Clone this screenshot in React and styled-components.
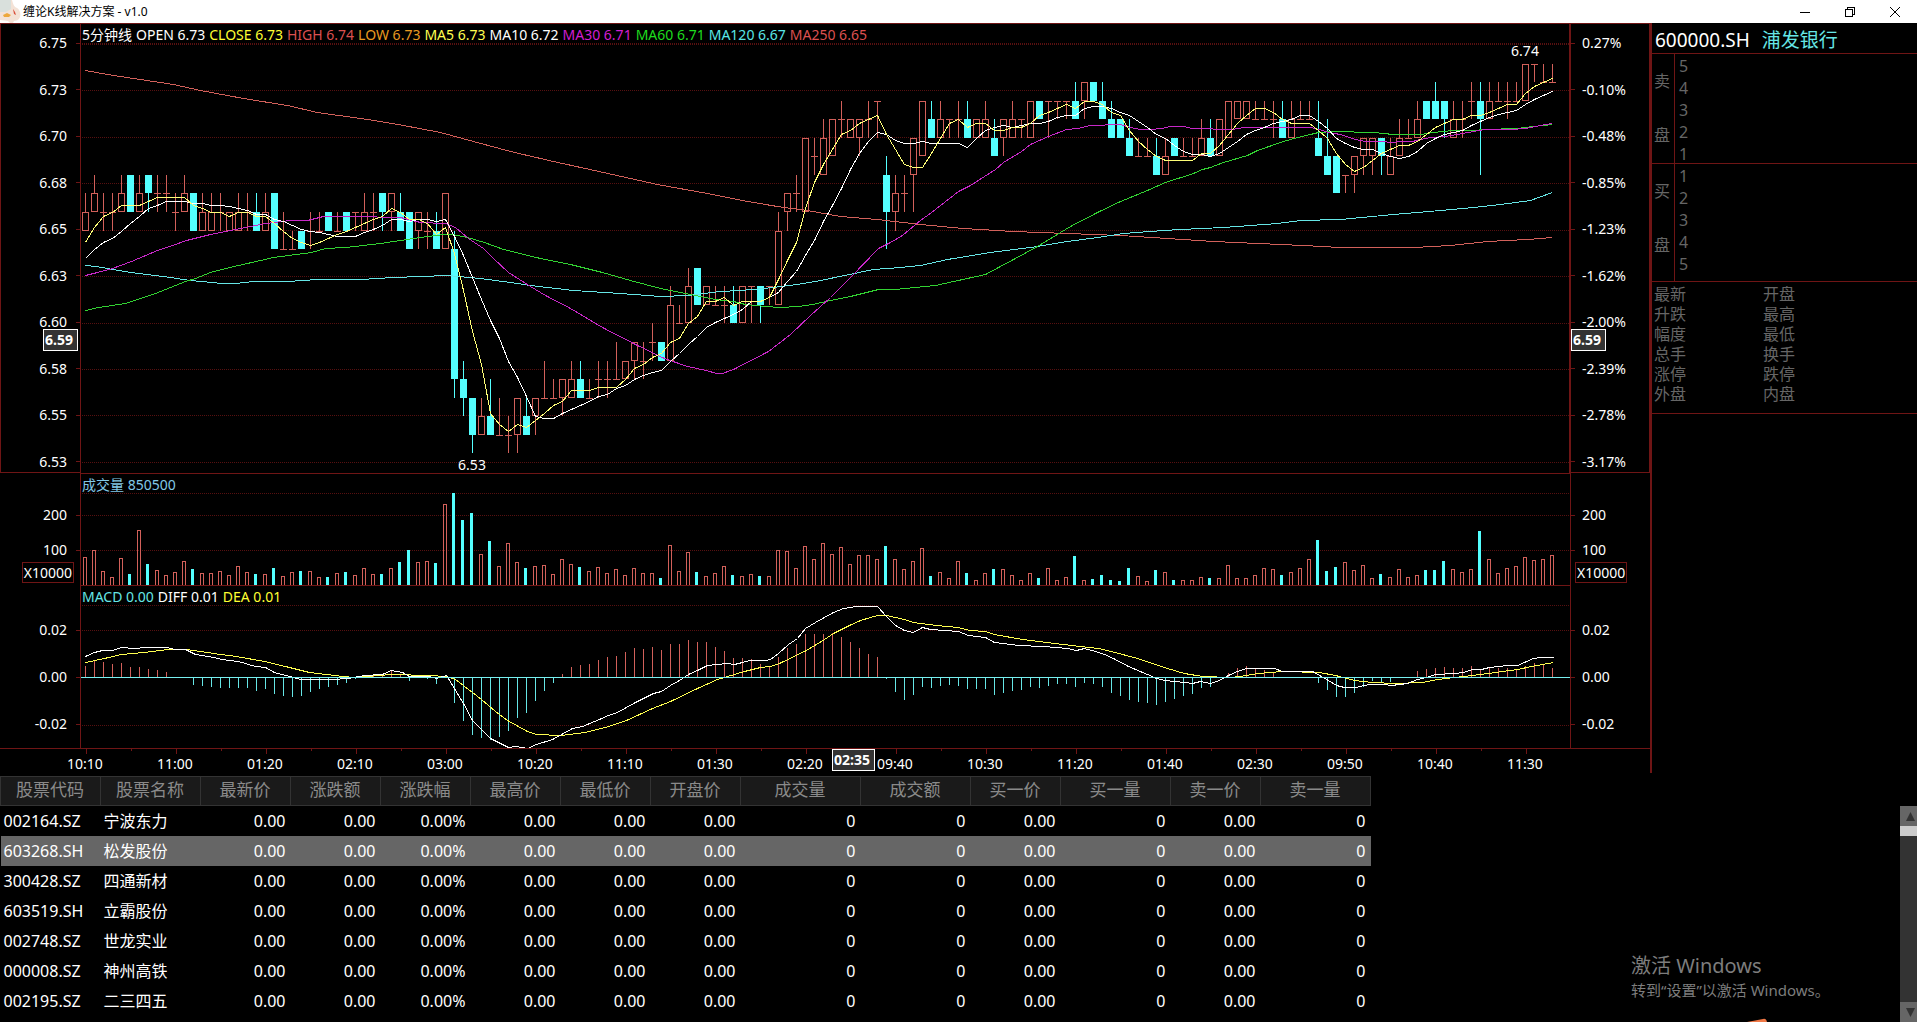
import React from "react";
import styled, { createGlobalStyle } from "styled-components";

const GlobalStyle = createGlobalStyle`
  * {
    box-sizing: border-box;
  }

  body {
    margin: 0;
    background: #000;
    color: #fff;
    font-family: "Noto Sans", "Noto Sans CJK SC", sans-serif;
    font-size: 14px;
  }

  ul, ol {
    margin: 0;
    padding: 0;
    list-style: none;
  }

  button {
    padding: 0;
    border: 0;
    background: none;
    font: inherit;
  }
`;

const RED = "#d2605a";
const CYAN = "#54ffff";
const FRAME = "#6f1515";

const Window = styled.div`
  position: relative;
  display: flex;
  flex-direction: column;
  height: 100vh;
  overflow: hidden;
`;

const TitleBar = styled.header`
  display: flex;
  align-items: center;
  flex: none;
  height: 23px;
  background: #fff;
  color: #000;
`;

const WindowTitle = styled.h1`
  flex: 1;
  margin: 0 0 0 2px;
  font-size: 12px;
  font-weight: 400;
  line-height: 23px;
`;

const WindowButton = styled.button`
  display: flex;
  justify-content: center;
  align-items: center;
  width: 45px;
  height: 22px;
`;

const Workspace = styled.div`
  display: grid;
  grid-template-columns: minmax(0, 1fr) 267px;
  flex: none;
  height: 753px;
`;

const Charts = styled.main`
  display: flex;
  flex-direction: column;
`;

const ChartRow = styled.section`
  display: grid;
  grid-template-columns: 80px minmax(0, 1fr) 79px;
  grid-template-rows: 100%;
  flex: none;
  height: ${(p) => p.$height}px;
`;

const AxisLabel = styled.li`
  display: flex;
  flex-direction: ${(p) => (p.$right ? "row-reverse" : "row")};
  justify-content: flex-end;
  align-items: center;
  gap: ${(p) => (p.$right ? 7 : 9)}px;

  &::after {
    content: "";
    width: 4px;
    height: 1px;
    background: ${FRAME};
  }
`;

const Axis = styled.ul`
  position: relative;
  display: flex;
  flex-direction: column;
  justify-content: ${(p) => (p.$spread ? "space-between" : "flex-start")};
  padding-top: ${(p) => p.$top}px;
  line-height: 20px;
  border: 0 solid ${FRAME};
  border-width: ${(p) => (p.$framed ? "1px" : 0)};
  border-right-width: ${(p) => (p.$framed && p.$right ? "1px" : 0)};
  border-left-width: ${(p) => (p.$framed && !p.$right ? "1px" : 0)};

  ${AxisLabel} + ${AxisLabel} {
    margin-top: ${(p) => p.$gap || 0}px;
  }
`;

const Unit = styled.li`
  align-self: ${(p) => (p.$right ? "flex-start" : "flex-end")};
  margin: ${(p) => (p.$right ? "2px 0 0 4px" : "2px 6px 0 0")};
  height: 21px;
  padding: 0 1px;
  border: 1px solid ${FRAME};
  line-height: 19px;
`;

const Plot = styled.div`
  display: flex;
  flex-direction: column;
  border: 1px solid ${FRAME};
  border-width: 1px ${(p) => (p.$thick ? "2px" : "1px")} 0 1px;

  svg {
    display: block;
    flex: 1;
    width: 100%;
    min-height: 0;
  }
`;

const Legend = styled.div`
  display: flex;
  flex: none;
  gap: 4px;
  height: ${(p) => p.$height}px;
  padding-left: 1px;
  line-height: 21px;
  white-space: nowrap;
`;

const LegendItem = styled.span`
  color: ${(p) => p.$color};
`;

const CursorTag = styled.output`
  position: absolute;
  height: 22px;
  padding: 0 4px 0 1px;
  border: 1px solid #fff;
  background: #333;
  color: #fff;
  font-weight: 700;
  line-height: 19px;
`;

const PriceTag = styled(CursorTag)`
  top: 305px;
  ${(p) => (p.$right ? "left: 0;" : "right: 2px;")}
`;

const TimeTag = styled(CursorTag)`
  top: 0;
  left: 832px;
`;

const TimeAxis = styled.section`
  position: relative;
  flex: 1;
  border-top: 1px solid ${FRAME};

  svg {
    display: block;
    width: 100%;
    height: 5px;
  }
`;

const TimeList = styled.ol`
  display: flex;
  padding-left: 40px;
  line-height: 20px;
`;

const TimeLabel = styled.li`
  width: 90px;
  text-align: center;
`;

const Quote = styled.aside`
  height: 750px;
  border-left: 2px solid ${FRAME};
  color: #666;
  font-size: 16px;
`;

const QuoteHead = styled.h2`
  display: flex;
  gap: 12px;
  height: 30px;
  margin: 0;
  padding-left: 3px;
  color: #fff;
  font-size: 19px;
  font-weight: 400;
  line-height: 35px;
`;

const StockName = styled.span`
  color: #66e6e6;
`;

const OrderSide = styled.section`
  display: flex;
  height: ${(p) => p.$height}px;
  border-top: 1px solid ${FRAME};
`;

const SideName = styled.h3`
  display: flex;
  flex-direction: column;
  justify-content: space-around;
  width: 22px;
  height: 108px;
  margin: 0;
  padding-left: 2px;
  font-size: 16px;
  font-weight: 400;
  line-height: 24px;
`;

const OrderLevels = styled.ol`
  flex: 1;
  padding: 1px 0 0 4px;
  border-left: 1px solid ${FRAME};
  line-height: 22px;
`;

const QuoteFacts = styled.ul`
  display: grid;
  grid-template-columns: 109px 1fr;
  grid-auto-rows: 20px;
  align-content: start;
  height: 133px;
  padding: 2px 0 0 2px;
  border: 1px solid ${FRAME};
  border-width: 1px 0;
  line-height: 20px;
`;

const ListArea = styled.section`
  display: flex;
  justify-content: space-between;
  flex: 1;
  min-height: 0;
`;

const StockTable = styled.table`
  table-layout: fixed;
  width: 1371px;
  border-collapse: collapse;
  align-self: flex-start;
  font-size: 16px;
`;

const HeadCell = styled.th`
  height: 29px;
  padding: 0 1px 2px 0;
  border: 1px solid #333;
  background: #1a1a1a;
  color: #8a8a8a;
  font-size: 17px;
  font-weight: 400;
  line-height: 26px;
`;

const Row = styled.tr`
  height: 30px;
  background: ${(p) => (p.$selected ? "#666" : "transparent")};
`;

const Cell = styled.td`
  padding: 0 5px 0 3px;
  line-height: 24px;
  text-align: ${(p) => (p.$text ? "left" : "right")};
`;

const ScrollBar = styled.div`
  display: flex;
  flex-direction: column;
  width: 17px;
  margin-top: 30px;
  background: #333;
`;

const ScrollButton = styled.button`
  height: 20px;
  background: #666;
  color: #333;

  svg {
    display: block;
    margin-left: 6px;
  }
`;

const Thumb = styled.div`
  height: 10px;
  margin-bottom: auto;
  background: #ccc;
`;

const Watermark = styled.div`
  position: absolute;
  right: 84px;
  bottom: 22px;
  width: 202px;
  color: #7d7d7d;
  font-size: 15px;
  line-height: 20px;
  white-space: nowrap;
`;

const WatermarkTitle = styled.div`
  font-size: 20px;
  line-height: 28px;
`;

const Sticker = styled.svg`
  position: absolute;
  right: 148px;
  bottom: 0;
`;

// Each candle is "open high low close", in cents above 6.00
const candles = `65 67 65 66,66 68 66 67,66 67 65 66,66 67 65 66,66 68 66 67,68 68 66 66,66 68 66 67,68 68 66 67,67 68 66 67,67 68 66 67,
66 67 65 66,66 68 66 67,67 67 65 65,65 67 65 66,65 67 65 66,66 67 65 66,65 66 65 66,65 67 65 66,66 67 65 66,66 67 65 65,
65 67 65 66,67 67 64 64,64 66 64 64,64 65 64 64,65 65 64 64,65 66 64 65,65 66 65 65,66 66 65 65,65 66 65 65,66 66 65 65,
66 66 65 66,65 67 65 66,66 67 65 66,67 67 65 66,66 67 65 67,66 67 65 65,66 66 64 64,65 66 64 66,65 66 64 65,65 66 64 64,
64 67 64 67,64 65 56 57,57 58 55 56,56 56 53 54,54 56 54 55,55 57 54 54,54 56 54 54,54 55 53 54,54 56 53 56,55 56 54 54,
55 56 54 56,56 58 56 56,56 57 56 56,56 57 55 57,56 58 56 57,57 58 56 56,56 57 56 56,57 58 56 57,57 58 56 57,57 59 57 57,
57 58 57 58,58 59 57 59,58 59 57 58,59 60 58 59,59 59 58 58,58 62 58 61,60 61 60 60,60 63 60 62,63 63 61 61,61 62 61 62,
61 62 61 61,61 62 60 61,61 62 60 60,60 62 60 62,62 62 60 62,62 62 60 61,62 62 61 62,61 66 61 65,66 67 65 67,67 68 66 67,
66 70 66 70,69 70 68 69,68 71 68 70,69 71 69 71,71 72 70 71,70 71 70 71,70 71 69 71,71 72 70 71,72 72 70 72,68 69 64 66,
66 68 65 67,67 68 66 67,68 70 66 70,69 72 69 72,71 72 70 70,70 72 70 71,71 71 70 71,71 72 70 71,71 72 70 70,70 71 70 71,
70 72 70 71,70 71 69 69,70 71 69 71,70 72 70 71,71 71 70 71,70 72 70 72,72 72 71 71,72 72 70 72,72 72 71 72,72 72 71 72,
72 73 71 71,72 73 71 73,73 73 72 72,72 73 71 71,71 72 70 70,71 71 70 70,70 71 69 69,69 70 69 69,69 70 69 69,69 70 68 68,
68 70 68 69,70 70 69 69,69 70 69 69,69 70 69 69,69 71 69 70,70 71 69 69,69 71 69 71,70 72 70 72,71 72 71 72,71 72 71 72,
71 72 71 71,71 72 71 71,71 72 70 71,71 72 70 70,70 72 70 71,71 72 71 71,71 72 71 71,70 72 69 69,69 71 68 68,69 69 67 67,
68 68 67 68,68 69 67 69,69 70 68 70,69 70 68 70,70 70 68 69,68 70 68 69,69 71 69 70,70 71 70 70,70 72 70 71,72 72 71 71,
72 73 71 71,72 72 70 71,70 72 70 71,71 72 70 71,72 73 71 72,72 73 68 71,71 73 71 72,72 73 72 72,72 73 71 72,72 73 72 72,
72 74 72 74,74 74 73 74,73 74 73 73,73 74 73 73`
  .split(",")
  .map((c) => c.trim().split(" ").map(Number));

// closes of the session before, needed to start the short averages
const earlierCloses = [62, 62, 64, 63, 62, 63, 63, 65, 65];

const volumes = [
  28, 35, 14, 8, 27, 11, 55, 21, 15, 10, 13, 24, 16, 12, 12, 14, 10, 19, 13, 11,
  11, 17, 9, 13, 14, 14, 8, 8, 12, 13, 10, 17, 11, 11, 17, 23, 35, 23, 24, 22,
  81, 92, 65, 72, 31, 44, 19, 42, 23, 17, 19, 20, 11, 26, 21, 18, 14, 18, 12, 16,
  10, 17, 12, 12, 7, 40, 14, 33, 13, 9, 12, 19, 10, 9, 11, 9, 9, 35, 34, 17,
  39, 26, 42, 31, 38, 21, 30, 30, 26, 39, 26, 16, 24, 37, 9, 13, 7, 24, 12, 5,
  12, 16, 16, 10, 5, 12, 7, 17, 5, 8, 29, 5, 6, 10, 5, 4, 17, 9, 4, 15,
  13, 5, 5, 5, 8, 7, 7, 20, 7, 7, 10, 17, 16, 10, 13, 17, 26, 45, 14, 18,
  23, 15, 20, 7, 11, 8, 16, 8, 10, 15, 15, 24, 16, 13, 16, 54, 26, 12, 17, 19,
  28, 25, 26, 30,
];

const histogram = [
  11, 16, 15, 13, 14, 10, 10, 8, 7, 5, 0, 0, -8, -9, -10, -11, -11, -11, -11, -14,
  -12, -17, -19, -20, -19, -15, -12, -10, -8, -6, -2, 1, 2, 3, 6, 3, -4, 0, -2, -7,
  1, -26, -44, -58, -61, -63, -60, -54, -41, -36, -24, -14, -6, 3, 10, 12, 13, 17, 20, 21,
  25, 29, 28, 30, 27, 33, 33, 37, 35, 35, 30, 26, 19, 19, 18, 13, 11, 20, 29, 33,
  43, 43, 43, 44, 40, 35, 29, 23, 20, -2, -15, -23, -18, -10, -11, -9, -8, -9, -12, -12,
  -12, -18, -16, -14, -13, -10, -11, -9, -7, -7, -10, -6, -7, -10, -16, -19, -23, -25, -26, -28,
  -25, -22, -19, -17, -11, -10, 0, 4, 9, 11, 9, 7, 5, 0, 0, 0, 0, -6, -13, -20,
  -20, -16, -10, -4, -5, -5, 0, 0, 6, 8, 9, 10, 9, 9, 11, 8, 10, 9, 9, 8,
  11, 14, 12, 9,
];

const lines = {
  ma30: "85,275 97,272 112,268 131,261 157,250 175,244 186,240 210,234 230,230 265,223 290,220 307,220 323,216 352,216 400,217 420,222 445,223 455,227 468,238 483,248 492,257 508,272 530,286 545,295 570,308 602,327 635,344 664,358 687,366 706,370 716,373 722,373 733,369 768,351 790,334 810,315 830,297 850,277 878,248 890,242 902,235 920,220 931,212 958,191 970,185 995,169 1003,162 1021,151 1030,144 1048,136 1066,129 1078,128 1089,125 1120,124 1130,127 1140,129 1150,129 1161,128 1170,126 1183,126 1192,128 1205,128 1220,129 1232,129 1243,127 1310,127 1319,129 1328,132 1340,134 1355,139 1365,141 1380,141 1392,142 1400,141 1412,141 1420,139 1430,137 1445,136 1457,134 1473,131 1485,129 1510,129 1525,128 1540,125 1552,123",
  ma60: "85,310 98,307 125,303 155,293 185,281 195,278 210,272 225,268 273,257 311,252 325,248 345,247 380,243 420,237 443,234 452,234 467,237 484,242 503,249 540,258 570,264 602,272 630,280 660,288 695,295 715,299 733,301 745,304 765,306 780,307 798,306 812,304 830,300 850,296 878,289 895,289 935,285 985,274 1013,259 1037,246 1060,232 1070,226 1097,212 1120,201 1147,190 1165,182 1193,173 1202,169 1210,167 1223,162 1247,155 1257,150 1280,142 1293,138 1310,134 1318,132 1333,131 1373,132 1393,134 1420,134 1433,132 1453,130 1473,130 1485,129 1517,128 1533,126 1552,124",
  ma120: "85,265 95,266 107,268 130,272 163,276 190,280 222,283 235,283 253,281 287,281 317,279 360,279 393,277 447,275 480,278 510,282 530,285 573,290 620,293 660,296 687,295 720,291 740,290 773,287 797,284 820,280 873,269 900,267 920,265 947,259 990,252 1037,246 1067,241 1097,237 1123,233 1163,230 1180,229 1223,227 1277,223 1300,220 1340,219 1393,214 1440,210 1473,207 1500,204 1530,200 1552,192",
  ma250: "85,70 107,74 133,78 173,84 200,90 243,98 287,105 317,112 367,119 403,125 440,132 473,141 510,151 553,161 603,172 657,184 707,193 747,201 783,207 807,210 840,216 877,219 920,224 963,228 1013,231 1067,233 1120,235 1167,238 1213,241 1280,244 1303,245 1340,247 1413,247 1450,245 1487,241 1527,239 1552,237",
  diff: "85,656 94,652 102,650 112,650 121,647 134,648 145,647 166,647 175,649 185,649 195,654 214,657 221,659 238,661 255,666 265,667 274,672 293,677 300,679 332,679 348,678 364,675 382,674 391,670 402,672 409,676 429,676 436,678 446,675 463,703 472,720 481,729 490,738 508,747 516,746 527,748 536,744 552,739 572,728 582,726 599,719 608,715 617,712 635,702 643,698 653,693 661,691 670,685 679,680 688,674 697,670 707,665 726,663 734,664 742,662 749,660 765,660 770,659 778,653 788,644 797,638 805,628 815,622 824,617 833,612 843,608 856,606 877,606 886,616 895,625 904,630 913,632 922,627 930,629 945,630 958,631 968,635 985,637 994,642 1018,645 1043,646 1067,648 1076,650 1084,648 1095,651 1104,654 1113,658 1128,666 1147,674 1156,678 1165,680 1184,682 1192,683 1200,681 1210,683 1219,680 1228,675 1237,671 1246,668 1274,668 1282,671 1312,671 1319,675 1328,680 1336,685 1344,687 1356,687 1363,685 1370,684 1383,684 1391,685 1407,683 1417,679 1426,677 1435,674 1454,673 1463,672 1472,669 1481,669 1489,667 1507,665 1517,665 1524,662 1533,658 1541,657 1553,657",
  dea: "85,662 104,658 121,654 143,652 168,649 186,649 207,652 220,654 236,656 264,661 289,667 309,672 343,676 354,677 391,674 429,675 446,676 455,679 472,692 481,699 495,711 507,720 527,731 536,734 561,735 585,732 608,726 626,720 652,708 670,701 697,688 717,679 744,671 760,667 770,666 779,663 806,650 824,639 833,633 849,625 860,620 877,615 886,615 904,619 913,622 936,625 958,627 969,630 985,631 994,634 1022,639 1054,643 1080,646 1098,648 1111,651 1137,658 1167,668 1184,673 1202,676 1230,677 1239,676 1258,673 1282,671 1319,672 1335,675 1354,680 1372,682 1394,683 1422,682 1437,679 1463,676 1480,674 1517,669 1531,666 1553,662",
};

const prices = ["6.75", "6.73", "6.70", "6.68", "6.65", "6.63", "6.60", "6.58", "6.55", "6.53"];
const percents = ["0.27%", "-0.10%", "-0.48%", "-0.85%", "-1.23%", "-1.62%", "-2.00%", "-2.39%", "-2.78%", "-3.17%"];
const times = ["10:10", "11:00", "01:20", "02:10", "03:00", "10:20", "11:10", "01:30", "02:20", "09:40", "10:30", "11:20", "01:40", "02:30", "09:50", "10:40", "11:30"];

const priceLegend = [
  ["5分钟线", "#fff"],
  ["OPEN 6.73", "#fff"],
  ["CLOSE 6.73", "#ffff32"],
  ["HIGH 6.74", "#dc5050"],
  ["LOW 6.73", "#e89a20"],
  ["MA5 6.73", "#ffff50"],
  ["MA10 6.72", "#fff"],
  ["MA30 6.71", "#d21ed2"],
  ["MA60 6.71", "#1edc1e"],
  ["MA120 6.67", "#5ae6e6"],
  ["MA250 6.65", "#dc5050"],
];

const macdLegend = [
  ["MACD 0.00", "#66e6e6"],
  ["DIFF 0.01", "#fff"],
  ["DEA 0.01", "#ffff32"],
];

const columns = [
  ["股票代码", 100],
  ["股票名称", 100],
  ["最新价", 90],
  ["涨跌额", 90],
  ["涨跌幅", 90],
  ["最高价", 90],
  ["最低价", 90],
  ["开盘价", 90],
  ["成交量", 120],
  ["成交额", 110],
  ["买一价", 90],
  ["买一量", 110],
  ["卖一价", 90],
  ["卖一量", 110],
];

const stocks = [
  ["002164.SZ", "宁波东力"],
  ["603268.SH", "松发股份"],
  ["300428.SZ", "四通新材"],
  ["603519.SH", "立霸股份"],
  ["002748.SZ", "世龙实业"],
  ["000008.SZ", "神州高铁"],
  ["002195.SZ", "二三四五"],
];

const emptyQuote = ["0.00", "0.00", "0.00%", "0.00", "0.00", "0.00", "0", "0", "0.00", "0", "0.00", "0"];

const facts = ["最新", "开盘", "升跌", "最高", "幅度", "最低", "总手", "换手", "涨停", "跌停", "外盘", "内盘"];

const barX = (i) => 85 + i * 9;
const priceY = (cents) => Math.round(63.5 + (74 - cents) * 18.57);
const isDown = ([open, , , close]) => close < open;

function average(period) {
  const closes = [...earlierCloses, ...candles.map((c) => c[3])];
  return candles
    .map((_, i) => {
      const end = i + earlierCloses.length + 1;
      const sum = closes.slice(end - period, end).reduce((a, b) => a + b, 0);
      return `${barX(i)},${priceY(sum / period)}`;
    })
    .join(" ");
}

function Curve({ points, color }) {
  return (
    <polyline
      points={points}
      fill="none"
      stroke={color}
      transform="translate(0.5 0.5)"
    />
  );
}

// Charts share one coordinate system; top is where the pane starts in it
function Pane({ top, grid, children }) {
  return (
    <svg shapeRendering="crispEdges">
      <g transform={`translate(-81 ${-top})`}>
        {grid.map((y) => (
          <line
            key={y}
            x1="82"
            x2="120%"
            y1={y + 0.5}
            y2={y + 0.5}
            stroke="#571010"
            strokeDasharray="1 1"
          />
        ))}
        {children}
      </g>
    </svg>
  );
}

function Candle({ candle, index }) {
  const [open, high, low, close] = candle;
  const x = barX(index);
  const top = priceY(Math.max(open, close));
  const bottom = priceY(Math.min(open, close));
  if (isDown(candle)) {
    return (
      <g fill={CYAN}>
        <rect x={x} y={priceY(high)} width="1" height={priceY(low) - priceY(high)} />
        <rect x={x - 3} y={top} width="7" height={bottom - top} />
      </g>
    );
  }
  return (
    <g fill={RED}>
      <rect x={x} y={priceY(high)} width="1" height={top - priceY(high)} />
      <rect x={x} y={bottom} width="1" height={priceY(low) - bottom} />
      {top === bottom ? (
        <rect x={x - 3} y={top} width="7" height="1" />
      ) : (
        <rect x={x - 2.5} y={top + 0.5} width="6" height={bottom - top - 1} fill="none" stroke={RED} />
      )}
    </g>
  );
}

function PriceChart() {
  return (
    <Plot $thick>
      <Legend $height={16}>
        {priceLegend.map(([text, color]) => (
          <LegendItem key={text} $color={color}>{text}</LegendItem>
        ))}
      </Legend>
      <Pane top={40} grid={[43, 44, 90, 137, 183, 230, 276, 323, 369, 415, 462]}>
        {candles.map((c, i) => (
          <Candle key={i} candle={c} index={i} />
        ))}
        <Curve points={lines.ma250} color="#d2605a" />
        <Curve points={lines.ma120} color="#66e6e6" />
        <Curve points={lines.ma60} color="#32d232" />
        <Curve points={lines.ma30} color="#c828c8" />
        <Curve points={average(10)} color="#fff" />
        <Curve points={average(5)} color="#ffff78" />
        <text x="1525" y="56" fill="#fff" textAnchor="middle">6.74</text>
        <text x="472" y="470" fill="#fff" textAnchor="middle">6.53</text>
      </Pane>
    </Plot>
  );
}

function VolumeChart() {
  return (
    <Plot>
      <Legend $height={19}>
        <LegendItem $color="#82c8e6">成交量 850500</LegendItem>
      </Legend>
      <Pane top={493} grid={[493, 515, 550]}>
        {volumes.map((v, i) =>
          isDown(candles[i]) ? (
            <rect key={i} x={barX(i) - 2} y={585 - v} width="3" height={v} fill={CYAN} />
          ) : (
            <path key={i} d={`M${barX(i) - 1.5} 585v${0.5 - v}h3v${v - 0.5}`} fill="none" stroke={RED} />
          )
        )}
      </Pane>
    </Plot>
  );
}

function MacdChart() {
  return (
    <Plot>
      <Legend $height={19}>
        {macdLegend.map(([text, color]) => (
          <LegendItem key={text} $color={color}>{text}</LegendItem>
        ))}
      </Legend>
      <Pane top={605} grid={[605, 630, 725]}>
        {histogram.map((h, i) => (
          <rect
            key={i}
            x={barX(i)}
            y={h > 0 ? 677 - h : 677}
            width="1"
            height={Math.abs(h)}
            fill={h > 0 ? RED : "#66e6e6"}
          />
        ))}
        <Curve points={lines.dea} color="#ffff50" />
        <Curve points={lines.diff} color="#fff" />
        <line x1="81" x2="120%" y1="677.5" y2="677.5" stroke="#78f0f0" />
      </Pane>
    </Plot>
  );
}

function AxisLabels({ labels, right }) {
  return labels.map((text) => (
    <AxisLabel key={text} $right={right}>{text}</AxisLabel>
  ));
}

function OrderBook({ name, levels, height }) {
  return (
    <OrderSide $height={height}>
      <SideName>
        {[...name].map((char) => (
          <span key={char}>{char}</span>
        ))}
      </SideName>
      <OrderLevels>
        {levels.map((n) => (
          <li key={n}>{n}</li>
        ))}
      </OrderLevels>
    </OrderSide>
  );
}

function AppIcon() {
  return (
    <svg width="21" height="23" viewBox="0 0 21 23">
      <path d="M0 0h12c1 4 2 7 5 8 3 2 4 6 3 9s-4 4-6 4l-1 2h-3l-2-2-8-1z" fill="#f3e2d6" />
      <path d="M0 0h11v9l-5 3-6 0z" fill="#d9e0dc" />
      <path d="M3 15l4-2 4 2-2 2H4z" fill="#eda83c" />
      <path d="M13 9l2 3 1 3-2-1z" fill="#d9503c" />
    </svg>
  );
}

function App() {
  return (
    <Window>
      <GlobalStyle />
      <TitleBar>
        <AppIcon />
        <WindowTitle>缠论K线解决方案 - v1.0</WindowTitle>
        <WindowButton aria-label="最小化">
          <svg width="10" height="10" stroke="#000" shapeRendering="crispEdges">
            <path d="M0 5.5h10" />
          </svg>
        </WindowButton>
        <WindowButton aria-label="还原">
          <svg width="10" height="10" stroke="#000" fill="none" shapeRendering="crispEdges">
            <path d="M.5 2.5h7v7h-7zM2.5 2.5v-2h7v7h-2" />
          </svg>
        </WindowButton>
        <WindowButton aria-label="关闭">
          <svg width="10" height="10" stroke="#000">
            <path d="M0 0l10 10M10 0L0 10" />
          </svg>
        </WindowButton>
      </TitleBar>

      <Workspace>
        <Charts>
          <ChartRow $height={450}>
            <Axis $framed $spread $top={9}>
              <AxisLabels labels={prices} />
              <PriceTag>6.59</PriceTag>
            </Axis>
            <PriceChart />
            <Axis $framed $spread $right $top={9}>
              <AxisLabels labels={percents} right />
              <PriceTag $right>6.59</PriceTag>
            </Axis>
          </ChartRow>
          <ChartRow $height={112}>
            <Axis $top={32} $gap={15}>
              <AxisLabels labels={["200", "100"]} />
              <Unit>X10000</Unit>
            </Axis>
            <VolumeChart />
            <Axis $top={32} $gap={15} $right>
              <AxisLabels labels={["200", "100"]} right />
              <Unit $right>X10000</Unit>
            </Axis>
          </ChartRow>
          <ChartRow $height={163}>
            <Axis $top={35} $gap={27}>
              <AxisLabels labels={["0.02", "0.00", "-0.02"]} />
            </Axis>
            <MacdChart />
            <Axis $top={35} $gap={27} $right>
              <AxisLabels labels={["0.02", "0.00", "-0.02"]} right />
            </Axis>
          </ChartRow>
          <TimeAxis>
            <svg fill={FRAME}>
              {times.map((t, i) => (
                <React.Fragment key={t}>
                  <rect x={86 + i * 90} width="1" height="5" />
                  {i < times.length - 1 && <rect x={131 + i * 90} width="1" height="2" />}
                </React.Fragment>
              ))}
            </svg>
            <TimeList>
              {times.map((t) => (
                <TimeLabel key={t}>{t}</TimeLabel>
              ))}
            </TimeList>
            <TimeTag>02:35</TimeTag>
          </TimeAxis>
        </Charts>

        <Quote>
          <QuoteHead>
            600000.SH <StockName>浦发银行</StockName>
          </QuoteHead>
          <OrderBook name="卖盘" levels={[5, 4, 3, 2, 1]} height={110} />
          <OrderBook name="买盘" levels={[1, 2, 3, 4, 5]} height={118} />
          <QuoteFacts>
            {facts.map((f) => (
              <li key={f}>{f}</li>
            ))}
          </QuoteFacts>
        </Quote>
      </Workspace>

      <ListArea>
        <StockTable>
          <colgroup>
            {columns.map(([name, width]) => (
              <col key={name} width={width} />
            ))}
          </colgroup>
          <thead>
            <tr>
              {columns.map(([name]) => (
                <HeadCell key={name}>{name}</HeadCell>
              ))}
            </tr>
          </thead>
          <tbody>
            {stocks.map(([code, name]) => (
              <Row key={code} $selected={code === "603268.SH"}>
                <Cell $text>{code}</Cell>
                <Cell $text>{name}</Cell>
                {emptyQuote.map((value, i) => (
                  <Cell key={i}>{value}</Cell>
                ))}
              </Row>
            ))}
          </tbody>
        </StockTable>
        <ScrollBar>
          <ScrollButton aria-label="向上滚动">
            <svg width="9" height="9" fill="#333"><path d="M4.5 0L9 9H0z" /></svg>
          </ScrollButton>
          <Thumb />
          <ScrollButton aria-label="向下滚动">
            <svg width="9" height="9" fill="#333"><path d="M4.5 9L9 0H0z" /></svg>
          </ScrollButton>
        </ScrollBar>
      </ListArea>

      <Watermark>
        <WatermarkTitle>激活 Windows</WatermarkTitle>
        转到“设置”以激活 Windows。
      </Watermark>
      <Sticker width="23" height="4">
        <path d="M1 4L17 1Q20 0 21 4z" fill="#f07846" />
      </Sticker>
    </Window>
  );
}

export default App;
